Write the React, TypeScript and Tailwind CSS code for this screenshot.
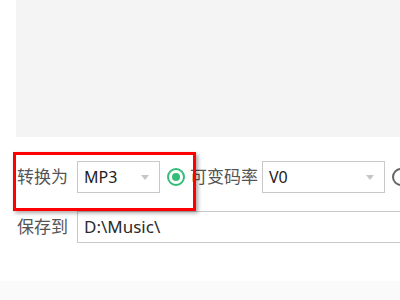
import React from "react";

function Caret() {
  return (
    <svg width="8" height="5" viewBox="0 0 8 5" className="shrink-0">
      <path d="M0 0h8L4 5z" fill="#c6c6c6" />
    </svg>
  );
}

function Select({ value, width }: { value: string; width: string }) {
  return (
    <div
      className={`${width} shrink-0 h-[32px] border border-[#c9c9c9] bg-white flex items-center justify-between pl-[6px] pr-[10px] text-[16px] text-[#222]`}
    >
      <span>{value}</span>
      <Caret />
    </div>
  );
}

function Radio({ checked }: { checked?: boolean }) {
  return (
    <div
      className={`w-[18px] h-[18px] rounded-full border-2 flex items-center justify-center shrink-0 ${
        checked ? "border-[#33bd78]" : "border-[#666]"
      }`}
    >
      {checked && <div className="w-[8px] h-[8px] rounded-full bg-[#33bd78]" />}
    </div>
  );
}

export default function App() {
  return (
    <div
      className="relative w-[400px] h-[300px] bg-white overflow-hidden"
      style={{ fontFamily: '"Noto Sans", "Noto Sans CJK SC", sans-serif' }}
    >
      <div className="ml-4 h-[137px] bg-[#f4f4f4]" />

      <div className="mt-[24px] flex items-center pl-[17px] whitespace-nowrap">
        <span className="w-[60px] shrink-0 text-[17px] text-[#555]">转换为</span>
        <Select value="MP3" width="w-[83px]" />
        <div className="ml-[7px] shrink-0">
          <Radio checked />
        </div>
        <span className="ml-[5px] w-[72px] shrink-0 text-[17px] text-[#555]">可变码率</span>
        <Select value="V0" width="w-[123px]" />
        <div className="ml-[7px] shrink-0">
          <Radio />
        </div>
      </div>

      <div className="mt-[18px] flex items-center pl-[17px] whitespace-nowrap">
        <span className="w-[60px] shrink-0 text-[17px] text-[#555]">保存到</span>
        <div className="w-[340px] shrink-0 h-[32px] border border-[#c9c9c9] flex items-center pl-[6px] text-[17px] text-[#2a2a2a]">
          D:\Music\
        </div>
      </div>

      <div className="absolute left-0 right-0 bottom-0 h-[19px] bg-[#fafafa]" />

      <div className="absolute left-[13px] top-[152px] w-[183px] h-[59px] border-[3px] border-[#ff0000] shadow-[2px_2px_4px_rgba(0,0,0,0.35)]" />
    </div>
  );
}
